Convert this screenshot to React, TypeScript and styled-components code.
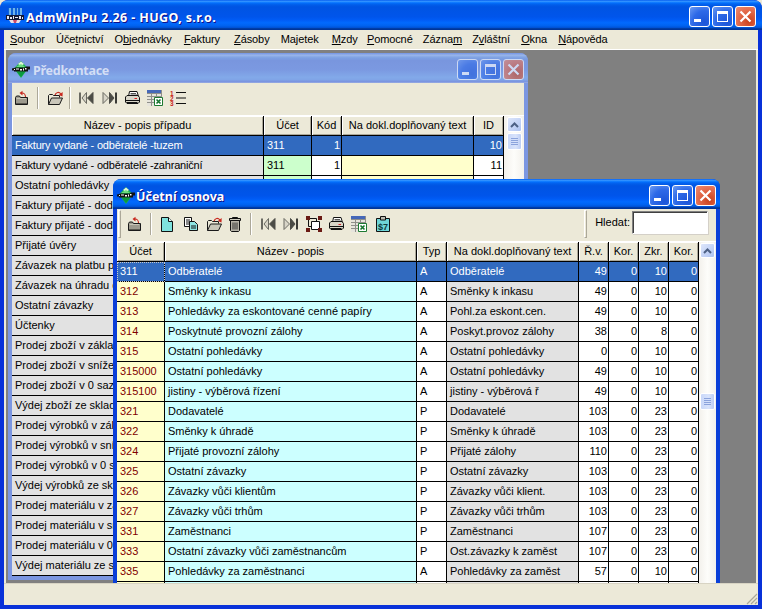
import React from "react";
import styled, { createGlobalStyle } from "styled-components";

const UI_FONT = `"Liberation Sans", Arial, sans-serif`;
const TITLE_FONT = `"Noto Sans", "Liberation Sans", sans-serif`;

const GlobalStyle = createGlobalStyle`
  html, body { margin: 0; padding: 0; background: #ece9d8; }
  body { font-family: ${UI_FONT}; font-size: 11px; color: #000; }
  #root { width: 762px; height: 609px; overflow: hidden; }
`;

const ACTIVE_GRADIENT = `linear-gradient(180deg,#0058ee 0,#3593ff 4%,#288eff 6%,#127dff 8%,#036ffc 10%,#0262ee 14%,#0057e5 20%,#0054e3 24%,#0055eb 56%,#005bf5 66%,#026afe 76%,#0062ef 86%,#0052d6 92%,#0040ab 94%,#003092 100%)`;
const INACTIVE_GRADIENT = `linear-gradient(180deg,#7697e7 0,#7e9ee3 3%,#94afe8 6%,#97b4e9 8%,#82a5e4 14%,#7c9fe2 17%,#7996de 25%,#7b99e1 56%,#82a9e9 81%,#80a5e7 89%,#7b96e1 94%,#7a93df 97%,#abbae3 100%)`;

/* ---------- application frame ---------- */
const AppFrame = styled.div`
  width: 762px;
  height: 609px;
  display: flex;
  flex-direction: column;
  box-sizing: border-box;
  background: #0831d9;
  border-radius: 8px 8px 0 0;
  overflow: hidden;
`;
const AppBody = styled.div`
  flex: 1;
  min-height: 0;
  display: flex;
  flex-direction: column;
  margin: 0 4px 4px;
  background: #ece9d8;
`;
const Caption = styled.div<{ $active: boolean; $pad: number }>`
  height: 30px;
  flex: none;
  box-sizing: border-box;
  display: flex;
  align-items: center;
  padding: 2px ${p => p.$pad}px 0 ${p => p.$pad}px;
  background: ${p => (p.$active ? ACTIVE_GRADIENT : INACTIVE_GRADIENT)};
  border-radius: 8px 8px 0 0;
`;
const CaptionText = styled.span<{ $active: boolean; $spacing: number; $gap: number }>`
  font-family: ${TITLE_FONT};
  font-weight: 700;
  font-size: 12.5px;
  letter-spacing: ${p => p.$spacing}px;
  margin-left: ${p => p.$gap}px;
  padding-top: 2px;
  white-space: nowrap;
  color: ${p => (p.$active ? "#fff" : "#d3def5")};
  text-shadow: ${p => (p.$active ? "1px 1px 0 #0f1089" : "none")};
`;
const CaptionButtons = styled.div`
  margin-left: auto;
  display: flex;
  gap: 2px;
`;
const CaptionButton = styled.div<{ $close?: boolean; $active: boolean }>`
  width: 21px;
  height: 21px;
  box-sizing: border-box;
  border: 1px solid #fff;
  border-radius: 3px;
  display: flex;
  align-items: center;
  justify-content: center;
  opacity: ${p => (p.$active ? 1 : 0.62)};
  background: ${p =>
    p.$close
      ? "radial-gradient(circle at 70% 75%, #c9411c 0%, #e36a4b 55%, #ee8d73 100%)"
      : "radial-gradient(circle at 75% 80%, #1c55d8 0%, #2e6ae8 55%, #6c9bf2 100%)"};
`;

const MenuBar = styled.div`
  height: 20px;
  flex: none;
  display: flex;
  align-items: center;
  padding: 0 0 2px 6px;
  gap: 11.2px;
  border-bottom: 1px solid #fff;
  box-sizing: border-box;
  font-size: 11px;
  letter-spacing: -0.1px;
`;
const MenuItem = styled.span<{ $nudge: number }>`
  white-space: nowrap;
  margin-left: ${p => p.$nudge}px;
  u { text-decoration: underline; text-underline-offset: 1px; }
`;

/* ---------- MDI desktop ---------- */
const Mdi = styled.div`
  flex: 1;
  min-height: 0;
  margin: 0 2px;
  position: relative;
  overflow: hidden;
  background: #808080;
`;
const StatusBar = styled.div`
  height: 22px;
  flex: none;
  position: relative;
  background: #ece9d8;
  border-top: 1px solid #d8d4c4;
  box-sizing: border-box;
`;
const Grip = styled.svg`
  position: absolute;
  right: 0;
  bottom: 0;
`;

const ChildWindow = styled.div<{ $left: number; $top: number; $width: number; $height: number; $active: boolean }>`
  position: absolute;
  left: ${p => p.$left}px;
  top: ${p => p.$top}px;
  width: ${p => p.$width}px;
  height: ${p => p.$height}px;
  display: flex;
  flex-direction: column;
  background: ${p => (p.$active ? "#0a3fd8" : "#7b96e1")};
  border-radius: 8px 8px 0 0;
`;
const ChildClient = styled.div`
  flex: 1;
  min-height: 0;
  margin: 0 4px 4px;
  background: #ece9d8;
  display: flex;
  flex-direction: column;
  overflow: hidden;
`;

/* ---------- toolbars ---------- */
const Toolbar = styled.div`
  height: 33px;
  flex: none;
  display: flex;
  align-items: center;
  box-sizing: border-box;
  padding-bottom: 2px;
  border-bottom: 1px solid #fff;
`;
const ToolButton = styled.div<{ $w: number }>`
  width: ${p => p.$w}px;
  height: 24px;
  flex: none;
  display: flex;
  align-items: center;
  justify-content: center;
`;
const ToolSep = styled.div<{ $w: number }>`
  width: ${p => p.$w}px;
  height: 22px;
  flex: none;
  position: relative;
  &::after {
    content: "";
    position: absolute;
    left: calc(50% - 1px);
    top: 0;
    bottom: 0;
    width: 1px;
    background: #aca899;
    border-right: 1px solid #fff;
  }
`;
const Gripper = styled.div<{ $w: number }>`
  width: ${p => p.$w}px;
  height: 28px;
  flex: none;
  position: relative;
  &::after {
    content: "";
    position: absolute;
    left: 1px;
    top: 0;
    bottom: 0;
    width: 1px;
    border: 1px solid;
    border-color: #fff #aca899 #aca899 #fff;
  }
`;
const SearchBox = styled.div`
  margin-left: auto;
  display: flex;
  align-items: center;
  height: 28px;
  padding-right: 8px;
`;
const SearchLabel = styled.span`
  margin: 0 2px 4px 3px;
`;
const SearchInput = styled.div`
  width: 76px;
  height: 23px;
  box-sizing: border-box;
  background: #fff;
  border: 1px solid #808080;
  border-right-color: #fff;
  border-bottom-color: #fff;
  box-shadow: inset 1px 1px 0 #404040, 1px 1px 0 #d4d0c8;
  margin-bottom: 3px;
`;

/* ---------- data grid ---------- */
const TableArea = styled.div`
  flex: 1;
  min-height: 0;
  display: flex;
`;
const Grid = styled.div<{ $cols: string }>`
  flex: none;
  display: grid;
  grid-template-columns: ${p => p.$cols};
  grid-auto-rows: 20px;
  align-content: start;
  background: #e0e0e0;
`;
const HeadCell = styled.div`
  box-sizing: border-box;
  display: flex;
  align-items: center;
  justify-content: center;
  padding-bottom: 2px;
  white-space: nowrap;
  overflow: hidden;
  background: #ece9d8;
  border-right: 1px solid #000;
  border-bottom: 1px solid #000;
  box-shadow: inset 1px 1px 0 #fff, inset -1px -1px 0 #aca899;
`;
const Cell = styled.div<{ $bg: string; $right?: boolean; $sel?: boolean; $color?: string; $focus?: boolean; $tight?: boolean }>`
  box-sizing: border-box;
  display: flex;
  align-items: center;
  justify-content: ${p => (p.$right ? "flex-end" : "flex-start")};
  padding: 0 1px 2px 3px;
  white-space: nowrap;
  overflow: hidden;
  letter-spacing: ${p => (p.$tight ? "-0.18px" : "0")};
  background: ${p => (p.$sel ? "#316abf" : p.$bg)};
  color: ${p => (p.$sel ? "#fff" : p.$color || "#000")};
  border-right: 1px solid #000;
  border-bottom: 1px solid #000;
  outline: ${p => (p.$focus ? "1px dotted #c8c8c8" : "none")};
  outline-offset: -1px;
`;

const Scroll = styled.div`
  flex: 1;
  display: flex;
  flex-direction: column;
  align-items: center;
  background: linear-gradient(90deg, #f3f1ec 0%, #fdfdfa 50%, #f3f1ec 100%);
  padding-top: 1px;
`;
const ScrollUp = styled.div`
  width: 15px;
  height: 15px;
  box-sizing: border-box;
  border: 1px solid #fff;
  border-radius: 2px;
  background: linear-gradient(135deg, #dde6fb 0%, #c2d2f6 60%, #aec3f0 100%);
  display: flex;
  align-items: center;
  justify-content: center;
`;
const ScrollThumb = styled.div<{ $top: number }>`
  width: 15px;
  height: 17px;
  margin-top: ${p => p.$top}px;
  box-sizing: border-box;
  border: 1px solid #fff;
  border-radius: 2px;
  background: linear-gradient(90deg, #c9d8f9 0%, #d8e3fb 60%, #bccdf4 100%);
  display: flex;
  flex-direction: column;
  align-items: center;
  justify-content: center;
  gap: 1px;
  i { display: block; width: 7px; height: 1px; background: #8ba3dc; }
`;

/* ---------- icons ---------- */
const Ico = styled.svg`
  display: block;
  overflow: visible;
`;
const I = ({ children }: { children: React.ReactNode }) => (
  <Ico width="16" height="16" viewBox="0 0 16 16">{children}</Ico>
);
const RedArc = ({ d, head }: { d: string; head: string }) => (
  <>
    <path d={d} fill="none" stroke="#c8281e" strokeWidth="1.1" />
    <path d={head} fill="#c8281e" />
  </>
);
const IconUndoFolder = () => (
  <I>
    <path d="M1.500 7.500l1-1.500h3l1 1.500h7v7h-12z" fill="#9d9a8e" stroke="#1a1a1a" />
    <path d="M2.500 8.500h9.500" stroke="#c8c5b8" />
    <path d="M2 13.500h11" stroke="#5a5850" />
    <RedArc d="M11.500 7C11.500 4.500 10 3 8 3" head="M8.500 .8L5.500 3l3 2.400z" />
  </I>
);
const IconOpen = () => (
  <I>
    <path d="M1.500 14.500v-9l1-1h3l1 1h6v2" fill="#ece9d8" stroke="#1a1a1a" />
    <path d="M1.500 14.500l3-6.500h11l-3 6.500z" fill="#c9c6b9" stroke="#1a1a1a" />
    <RedArc d="M8 5C9 2 12 1.500 14 4" head="M15.700 2L15.500 6.500L11.800 5z" />
  </I>
);
const IconFirst = () => (
  <I>
    <path d="M1 2.500h2v11h-2z" fill="#6a6a62" />
    <path d="M8.500 2.500L4 8l4.500 5.500z" fill="#d8d5c8" stroke="#6a6a62" />
    <path d="M15 2.500L9.500 8l5.500 5.500z" fill="#4c4c46" stroke="#4c4c46" />
  </I>
);
const IconLast = () => (
  <I>
    <path d="M13 2.500h2v11h-2z" fill="#3a3a36" />
    <path d="M7.500 2.500L12 8l-4.500 5.500z" fill="#4c4c46" stroke="#4c4c46" />
    <path d="M1 2.500L6.500 8L1 13.500z" fill="#d8d5c8" stroke="#6a6a62" />
  </I>
);
const IconPrint = () => (
  <I>
    <path d="M5.500 1.500h7.500l1.500 5h-10z" fill="#fff" stroke="#111" />
    <path d="M6.500 3.500h5.500M6.500 5h6.500" stroke="#555" />
    <path d="M1.500 7l1.500-1.500h11l1.500 2v4.500l-1.500 1.500h-11l-1.500-1.500z" fill="#d8d5c8" stroke="#111" />
    <path d="M1 10.500h15" stroke="#111" />
    <path d="M2.500 12.500h11" stroke="#111" />
    <path d="M10.500 8.500h2.500" stroke="#d8242a" />
  </I>
);
const IconExcel = () => (
  <I>
    <path d="M0 0h15v3h-15z" fill="#4668b8" />
    <path d="M0 3h15v13h-15z" fill="#e6e4dc" />
    <path d="M0 3.500h15M0 6.500h15M0 9.500h8M0 12.500h8M4.500 3v13M9.500 3v4M14.500 0v7" stroke="#8f8f8a" strokeWidth="1" />
    <path d="M7.500 7.500h8v8h-8z" fill="#fff" stroke="#1d7a31" />
    <path d="M9.500 9.500l4 4M13.500 9.500l-4 4" stroke="#16752c" strokeWidth="1.600" />
  </I>
);
const IconList = () => (
  <I>
    <text x="0" y="5.500" fontSize="6.500" fontWeight="700" fill="#c8281e" fontFamily="Liberation Sans">1</text>
    <text x="0" y="10.800" fontSize="6.500" fontWeight="700" fill="#c8281e" fontFamily="Liberation Sans">2</text>
    <text x="0" y="16" fontSize="6.500" fontWeight="700" fill="#c8281e" fontFamily="Liberation Sans">3</text>
    <path d="M6 2.500h10M6 8h10M6 13.500h10" stroke="#111" />
  </I>
);
const IconNew = () => (
  <I>
    <path d="M2.500 1.500h7l4 4v10h-11z" fill="#7fe3de" stroke="#111" />
    <path d="M9.500 1.500v4h4" fill="#e8fbfa" stroke="#111" />
  </I>
);
const IconCopy = () => (
  <I>
    <path d="M1.500 1.500h7v9h-7z" fill="#fff" stroke="#111" />
    <path d="M3 4h4M3 6h4M3 8h4" stroke="#111" />
    <path d="M6.500 5.500h5l3 3v6h-8z" fill="#8fe6e2" stroke="#111" />
    <path d="M8 10h5M8 12h5" stroke="#111" />
  </I>
);
const IconTrash = () => (
  <I>
    <path d="M5.500 2.500v-1h5v1" fill="none" stroke="#111" />
    <path d="M2.500 2.500h11v2h-11z" fill="#d0cdc0" stroke="#111" />
    <path d="M3.500 4.500h9v10l-1 1h-7l-1-1z" fill="#b7b4a8" stroke="#111" />
    <path d="M6 6.500v7M8 6.500v7M10 6.500v7" stroke="#333" />
  </I>
);
const IconFrame = () => (
  <I>
    <path d="M2.500 2.500h8v3" fill="none" stroke="#111" />
    <path d="M2.500 2.500v8h3" fill="none" stroke="#111" />
    <path d="M5.500 5.500h8v8h-8z" fill="#fff" stroke="#111" />
    <path d="M0 0h4v4h-4zM12 0h4v4h-4zM0 12h4v4h-4zM12 12h4v4h-4z" fill="#6a1a14" />
  </I>
);
const IconCalc = () => (
  <I>
    <path d="M1.500 2.500h13v13h-13z" fill="#6fd6d8" stroke="#111" />
    <path d="M5.500 .5h5v3.500h-5z" fill="#bdbdb2" stroke="#111" />
    <text x="3" y="13.500" fontSize="9" fontWeight="700" fill="#0d3b3e" fontFamily="Liberation Sans">$7</text>
  </I>
);
const Logo = () => (
  <Ico width="18" height="17" viewBox="0 0 18 17">
    <path d="M9 0l7 7.500-7 9.500-7-9.500z" fill="#1fb552" />
    <path d="M6 3l3-2.500 3 2.500-3 2z" fill="#dff5d8" />
    <path d="M4 6h9l-4-3z" fill="#6fdc80" />
    <path d="M0 7.500l4-1h9l1-1h4v3h-2v2H2v-1H0z" fill="#111" />
    <path d="M2 8h1v1H2zM4 7.500h3v1H4zM8 8h2v1.500H8zM11 7.500h1v2h-1zM13 7h1.500v1.500H13z" fill="#fff" />
    <path d="M5 11h8l-4 5z" fill="#0c9a3f" />
  </Ico>
);
const AppLogo = () => (
  <Ico width="18" height="18" viewBox="0 0 18 18">
    <path d="M2 1h14v8H2z" fill="#0f62d8" />
    <path d="M3 1h2v7H3zM7 1h2v7H7zM11 1h1v7h-1zM14 1h2v7h-2z" fill="#6fb4ea" />
    <path d="M0 8h18v5H0z" fill="#141a34" />
    <path d="M1 9h2v3H1zM4 10h2v2H4zM7 9h1v3H7zM9 10h3v1H9zM13 9h2v3h-2zM16 10h1v2h-1z" fill="#e8eaf2" />
    <path d="M3 13h12l-2 3H5z" fill="#e7dfe6" />
    <path d="M7 13h4l-1 3H8z" fill="#c84a6a" />
  </Ico>
);
const MinGlyph = () => (
  <svg width="19" height="19" viewBox="0 0 19 19"><path d="M4 12h7v3H4z" fill="#fff" /></svg>
);
const MaxGlyph = () => (
  <svg width="19" height="19" viewBox="0 0 19 19"><path d="M4 4h11v11H4zM5 7v7h9V7z" fill="#fff" fillRule="evenodd" /></svg>
);
const CloseGlyph = () => (
  <svg width="19" height="19" viewBox="0 0 19 19"><path d="M4.500 4.500l10 10M14.500 4.500l-10 10" stroke="#fff" strokeWidth="2.200" /></svg>
);
const ArrowUp = () => (
  <svg width="9" height="6" viewBox="0 0 9 6"><path d="M1 5l3.500-3.500L8 5" fill="none" stroke="#4d6185" strokeWidth="2" /></svg>
);

/* ---------- caption assembly ---------- */
const WindowCaption = ({ title, active, pad, spacing, gap, icon }: { title: string; active: boolean; pad: number; spacing: number; gap: number; icon: React.ReactNode }) => (
  <Caption $active={active} $pad={pad}>
    {icon}
    <CaptionText $active={active} $spacing={spacing} $gap={gap}>{title}</CaptionText>
    <CaptionButtons>
      <CaptionButton $active={active}><MinGlyph /></CaptionButton>
      <CaptionButton $active={active}><MaxGlyph /></CaptionButton>
      <CaptionButton $active={active} $close><CloseGlyph /></CaptionButton>
    </CaptionButtons>
  </Caption>
);

/* ---------- data ---------- */
const menus: [string, string, string, number][] = [
  ["", "S", "oubor", 0], ["Úče", "t", "nictví", 0], ["O", "b", "jednávky", 0], ["", "F", "aktury", 1],
  ["", "Z", "ásoby", 3], ["Ma", "j", "etek", 0], ["", "M", "zdy", 2], ["", "P", "omocné", -2],
  ["Zázna", "m", "", -1], ["Z", "v", "láštní", -1], ["", "O", "kna", 0], ["", "N", "ápověda", 0],
];

const preRows: [string, string, string, string][] = [
  ["Faktury vydané - odběratelé -tuzem", "311", "1", "10"],
  ["Faktury vydané - odběratelé -zahraniční", "311", "1", "11"],
  ["Ostatní pohledávky", "315", "1", "12"],
  ["Faktury přijaté - dodavatelé -tuzem", "", "", ""],
  ["Faktury přijaté - dodavatelé -zahraniční", "", "", ""],
  ["Přijaté úvěry", "", "", ""],
  ["Závazek na platbu příspěvků", "", "", ""],
  ["Závazek na úhradu daní", "", "", ""],
  ["Ostatní závazky", "", "", ""],
  ["Účtenky", "", "", ""],
  ["Prodej zboží v základní sazbě", "", "", ""],
  ["Prodej zboží v snížené sazbě", "", "", ""],
  ["Prodej zboží v 0 sazbě", "", "", ""],
  ["Výdej zboží ze skladu", "", "", ""],
  ["Prodej výrobků v základní sazbě", "", "", ""],
  ["Prodej výrobků v snížené sazbě", "", "", ""],
  ["Prodej výrobků v 0 sazbě", "", "", ""],
  ["Výdej výrobků ze skladu", "", "", ""],
  ["Prodej materiálu v základní sazbě", "", "", ""],
  ["Prodej materiálu v snížené sazbě", "", "", ""],
  ["Prodej materiálu v 0 sazbě", "", "", ""],
  ["Výdej materiálu ze skladu", "", "", ""],
];

const accRows: [string, string, string, string, string, string, string, string][] = [
  ["311", "Odběratelé", "A", "Odběratelé", "49", "0", "10", "0"],
  ["312", "Směnky k inkasu", "A", "Směnky k inkasu", "49", "0", "10", "0"],
  ["313", "Pohledávky za eskontované cenné papíry", "A", "Pohl.za eskont.cen.", "49", "0", "10", "0"],
  ["314", "Poskytnuté provozní zálohy", "A", "Poskyt.provoz zálohy", "38", "0", "8", "0"],
  ["315", "Ostatní pohledávky", "A", "Ostatní pohledávky", "0", "0", "10", "0"],
  ["315000", "Ostatní pohledávky", "A", "Ostatní pohledávky", "49", "0", "10", "0"],
  ["315100", "jistiny - výběrová řízení", "A", "jistiny - výběrová ř", "49", "0", "10", "0"],
  ["321", "Dodavatelé", "P", "Dodavatelé", "103", "0", "23", "0"],
  ["322", "Směnky k úhradě", "P", "Směnky k úhradě", "103", "0", "23", "0"],
  ["324", "Přijaté provozní zálohy", "P", "Přijaté zálohy", "110", "0", "23", "0"],
  ["325", "Ostatní závazky", "P", "Ostatní závazky", "103", "0", "23", "0"],
  ["326", "Závazky vůči klientům", "P", "Závazky vůči klient.", "103", "0", "23", "0"],
  ["327", "Závazky vůči trhům", "P", "Závazky vůči trhům", "103", "0", "23", "0"],
  ["331", "Zaměstnanci", "P", "Zaměstnanci", "107", "0", "23", "0"],
  ["333", "Ostatní závazky vůči zaměstnancům", "P", "Ost.závazky k zaměst", "107", "0", "23", "0"],
  ["335", "Pohledávky za zaměstnanci", "A", "Pohledávky za zaměst", "57", "0", "10", "0"],
  ["", "", "", "", "", "", "", ""],
];

const YELLOW = "#ffffcc";
const GREEN = "#ccffcc";
const CYAN = "#ccffff";
const GREY = "#e2e2e2";
const WHITE = "#ffffff";

export default function App() {
  return (
    <>
      <GlobalStyle />
      <AppFrame>
        <WindowCaption title="AdmWinPu 2.26 - HUGO, s.r.o." active pad={6} spacing={0.37} gap={2} icon={<AppLogo />} />
        <AppBody>
          <MenuBar>
            {menus.map(([a, u, b, n]) => (
              <MenuItem key={a + u + b} $nudge={n}>{a}<u>{u}</u>{b}</MenuItem>
            ))}
          </MenuBar>
          <Mdi>
            <ChildWindow $left={2} $top={3} $width={520} $height={527} $active={false}>
              <WindowCaption title="Předkontace" active={false} pad={4} spacing={-0.27} gap={3} icon={<Logo />} />
              <ChildClient>
                <Toolbar>
                  <ToolButton $w={19}><IconUndoFolder /></ToolButton>
                  <ToolSep $w={13} />
                  <ToolButton $w={22}><IconOpen /></ToolButton>
                  <ToolSep $w={8} />
                  <ToolButton $w={24}><IconFirst /></ToolButton>
                  <ToolButton $w={23}><IconLast /></ToolButton>
                  <ToolButton $w={22}><IconPrint /></ToolButton>
                  <ToolButton $w={24}><IconExcel /></ToolButton>
                  <ToolButton $w={22}><IconList /></ToolButton>
                </Toolbar>
                <TableArea>
                  <Grid $cols="252px 48px 30px 132px 30px">
                    <HeadCell>Název - popis případu</HeadCell>
                    <HeadCell>Účet</HeadCell>
                    <HeadCell>Kód</HeadCell>
                    <HeadCell>Na dokl.doplňovaný text</HeadCell>
                    <HeadCell>ID</HeadCell>
                    {preRows.map((r, i) => {
                      const sel = i === 0;
                      return (
                        <React.Fragment key={r[0] + i}>
                          <Cell $bg={GREY} $sel={sel} $tight={i < 2}>{r[0]}</Cell>
                          <Cell $bg={GREEN} $sel={sel}>{r[1]}</Cell>
                          <Cell $bg={WHITE} $sel={sel} $right>{r[2]}</Cell>
                          <Cell $bg={YELLOW} $sel={sel} />
                          <Cell $bg={WHITE} $sel={sel} $right>{r[3]}</Cell>
                        </React.Fragment>
                      );
                    })}
                  </Grid>
                  <Scroll>
                    <ScrollUp><ArrowUp /></ScrollUp>
                    <ScrollThumb $top={1}><i /><i /><i /><i /></ScrollThumb>
                  </Scroll>
                </TableArea>
              </ChildClient>
            </ChildWindow>

            <ChildWindow $left={107} $top={129} $width={607} $height={520} $active>
              <WindowCaption title="Účetní osnova" active pad={4} spacing={0} gap={1} icon={<Logo />} />
              <ChildClient>
                <Toolbar>
                  <Gripper $w={7} />
                  <ToolButton $w={22}><IconUndoFolder /></ToolButton>
                  <ToolSep $w={10} />
                  <ToolButton $w={22}><IconNew /></ToolButton>
                  <ToolButton $w={25}><IconCopy /></ToolButton>
                  <ToolButton $w={21}><IconOpen /></ToolButton>
                  <ToolButton $w={22}><IconTrash /></ToolButton>
                  <ToolSep $w={10} />
                  <ToolButton $w={23}><IconFirst /></ToolButton>
                  <ToolButton $w={23}><IconLast /></ToolButton>
                  <ToolButton $w={23}><IconFrame /></ToolButton>
                  <ToolButton $w={22}><IconPrint /></ToolButton>
                  <ToolButton $w={24}><IconExcel /></ToolButton>
                  <ToolButton $w={23}><IconCalc /></ToolButton>
                  <SearchBox>
                    <Gripper $w={9} />
                    <SearchLabel>Hledat:</SearchLabel>
                    <SearchInput />
                  </SearchBox>
                </Toolbar>
                <TableArea>
                  <Grid $cols="48px 252px 30px 132px 30px 30px 30px 30px">
                    <HeadCell>Účet</HeadCell>
                    <HeadCell>Název - popis</HeadCell>
                    <HeadCell>Typ</HeadCell>
                    <HeadCell>Na dokl.doplňovaný text</HeadCell>
                    <HeadCell>Ř.v.</HeadCell>
                    <HeadCell>Kor.</HeadCell>
                    <HeadCell>Zkr.</HeadCell>
                    <HeadCell>Kor.</HeadCell>
                    {accRows.map((r, i) => {
                      const sel = i === 0;
                      return (
                        <React.Fragment key={r[0] + i}>
                          <Cell $bg={YELLOW} $sel={sel} $focus={sel} $color="#800000">{r[0]}</Cell>
                          <Cell $bg={CYAN} $sel={sel}>{r[1]}</Cell>
                          <Cell $bg={WHITE} $sel={sel}>{r[2]}</Cell>
                          <Cell $bg={GREY} $sel={sel}>{r[3]}</Cell>
                          <Cell $bg={WHITE} $sel={sel} $right>{r[4]}</Cell>
                          <Cell $bg={WHITE} $sel={sel} $right>{r[5]}</Cell>
                          <Cell $bg={WHITE} $sel={sel} $right>{r[6]}</Cell>
                          <Cell $bg={WHITE} $sel={sel} $right>{r[7]}</Cell>
                        </React.Fragment>
                      );
                    })}
                  </Grid>
                  <Scroll>
                    <ScrollUp><ArrowUp /></ScrollUp>
                    <ScrollThumb $top={135}><i /><i /><i /><i /></ScrollThumb>
                  </Scroll>
                </TableArea>
              </ChildClient>
            </ChildWindow>
          </Mdi>
          <StatusBar>
            <Grip width="13" height="13" viewBox="0 0 13 13">
              <path d="M12 2L2 12M12 6L6 12M12 10L10 12" stroke="#aca899" strokeWidth="1.200" />
            </Grip>
          </StatusBar>
        </AppBody>
      </AppFrame>
    </>
  );
}
